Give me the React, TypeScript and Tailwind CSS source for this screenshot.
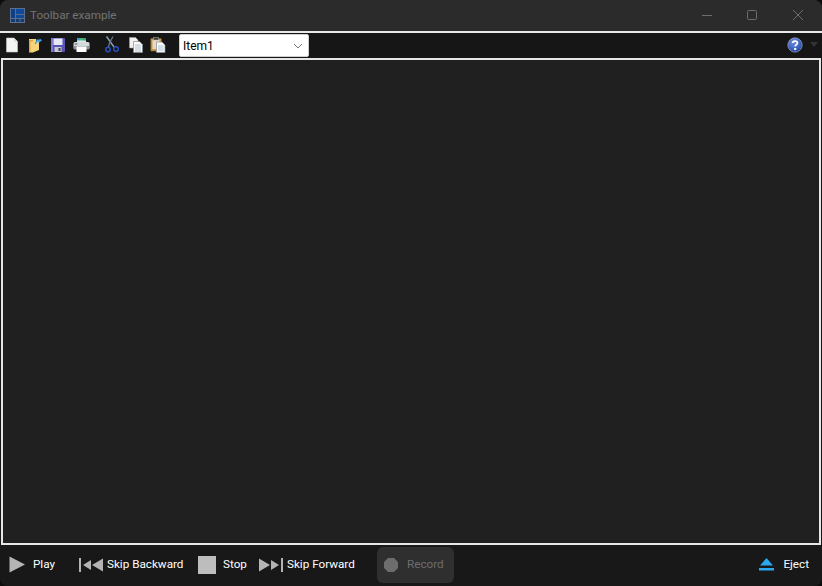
import React from "react";

const font = { fontFamily: 'Roboto, "Noto Sans", sans-serif' };

function PageIcon() {
  return (
    <svg width="16" height="16" viewBox="0 0 16 16">
      <path d="M2.5 1 H10 L13.5 4.5 V15 H2.5 Z" fill="#f4f4f4" stroke="#c8c8c8" strokeWidth="0.6" />
      <path d="M10 1 V4.5 H13.5" fill="#d8d8d8" />
    </svg>
  );
}
function OpenIcon() {
  return (
    <svg width="16" height="16" viewBox="0 0 16 16">
      <path d="M2 2 H9 V4 H12 V13 L6 15.5 H2 Z" fill="#f6d47a" />
      <path d="M6 3 H2 V15 H3.5 V4.5 H6 Z" fill="#e0a93e" />
      <path d="M7.5 7 L9.5 3.5 L9 2.5 H13 L12.5 1 L15 3.5 L11.5 6 L11.5 4.5 H10.5 L9 7 Z" fill="#3f9ae0" />
    </svg>
  );
}
function SaveIcon() {
  return (
    <svg width="16" height="16" viewBox="0 0 16 16">
      <rect x="1" y="1" width="14" height="14" rx="1" fill="#5a54b8" />
      <rect x="3.5" y="1.5" width="9" height="6.5" fill="#e6e6f4" />
      <rect x="4.5" y="10" width="7" height="5" fill="#c9c9d6" />
      <rect x="8.5" y="11" width="2" height="3" fill="#3a3a55" />
      <rect x="1" y="1" width="2" height="14" fill="#7f7ad8" />
    </svg>
  );
}
function PrintIcon() {
  return (
    <svg width="17" height="16" viewBox="0 0 17 16">
      <rect x="4" y="1.5" width="9" height="4" fill="#dfe8ea" />
      <rect x="4" y="1.5" width="3" height="2" fill="#35a0e0" />
      <rect x="7" y="1.5" width="3" height="2" fill="#3bc46a" />
      <rect x="10" y="1.5" width="3" height="2" fill="#1fa7a0" />
      <rect x="0.5" y="5" width="16" height="6.5" rx="1.5" fill="#d6dadc" />
      <rect x="0.5" y="9" width="16" height="3.5" rx="1" fill="#8d9296" />
      <rect x="3.5" y="9.5" width="10" height="5.5" fill="#ffffff" />
      <rect x="1.5" y="6.5" width="3" height="1" fill="#5a6066" />
    </svg>
  );
}
function CutIcon() {
  return (
    <svg width="16" height="17" viewBox="0 0 16 17" fill="none">
      <path d="M2.5 0.5 L10 11" stroke="#8fa3b4" strokeWidth="1.4" />
      <path d="M9 0.5 L5.5 7 L4.5 11" stroke="#5f7488" strokeWidth="1.4" />
      <circle cx="4" cy="13.5" r="2.3" stroke="#2650c0" strokeWidth="1.5" />
      <circle cx="12" cy="13" r="2.3" stroke="#2650c0" strokeWidth="1.5" />
    </svg>
  );
}
function CopyIcon() {
  return (
    <svg width="16" height="16" viewBox="0 0 16 16">
      <path d="M1.5 0.5 H7.5 L10 3 V11 H1.5 Z" fill="#f2f2f2" stroke="#9a9a9a" strokeWidth="0.6" />
      <path d="M5.5 4.5 H11.5 L14.5 7.5 V15.5 H5.5 Z" fill="#fafafa" stroke="#8a8a8a" strokeWidth="0.7" />
      <path d="M7 8 H13 M7 10 H13 M7 12 H13 M7 14 H13" stroke="#9ab4d0" strokeWidth="0.8" />
    </svg>
  );
}
function PasteIcon() {
  return (
    <svg width="16" height="16" viewBox="0 0 16 16">
      <rect x="0.8" y="1.5" width="10.5" height="12.5" rx="0.5" fill="#c69a50" stroke="#8f6a2c" strokeWidth="0.6" />
      <rect x="2.5" y="3" width="7" height="9" fill="#e6dcc4" />
      <rect x="3.5" y="0.5" width="5" height="2.5" fill="#3c3c3c" stroke="#b0b0b0" strokeWidth="0.5" />
      <path d="M6.5 5 H12 L15 8 V15.5 H6.5 Z" fill="#fafafa" stroke="#8a8a8a" strokeWidth="0.7" />
      <path d="M8 9 H13.5 M8 11 H13.5 M8 13 H13.5" stroke="#9ab4d0" strokeWidth="0.8" />
    </svg>
  );
}
function HelpIcon() {
  return (
    <svg width="16" height="16" viewBox="0 0 16 16">
      <defs>
        <radialGradient id="h" cx="0.4" cy="0.3" r="0.8">
          <stop offset="0" stopColor="#6f90e8" />
          <stop offset="1" stopColor="#1f3f9f" />
        </radialGradient>
      </defs>
      <circle cx="8" cy="8" r="7.2" fill="url(#h)" stroke="#c8d0e0" strokeWidth="0.5" />
      <path d="M5.7 6 C5.7 3.6 10.4 3.6 10.4 6 C10.4 7.6 8.2 7.6 8.2 9.6" fill="none" stroke="#fff" strokeWidth="1.7" />
      <rect x="7.2" y="11" width="2" height="2" fill="#fff" />
    </svg>
  );
}

const G = "#b4b4b4";

function ToolButton({ icon, label, w, gap }: { icon: React.ReactNode; label: string; w: string; gap: string }) {
  return (
    <div className={`flex items-center text-white ${w} ${gap}`}>
      {icon}
      <span className="whitespace-nowrap">{label}</span>
    </div>
  );
}

export default function App() {
  return (
    <div className="w-[822px] h-[586px] bg-[#0c0c0c] overflow-hidden" style={font}>
      <div className="h-full rounded-[8px] overflow-hidden flex flex-col bg-[#181818] text-[11.7px] text-white">
        <div className="h-[31px] shrink-0 bg-[#2b2b2b] flex items-center pl-[10px]">
          <svg width="15" height="15" viewBox="0 0 15 15" className="mr-[5px]">
            <rect x="0.5" y="0.5" width="14" height="14" fill="#16396e" stroke="#5a6f8e" />
            <rect x="1" y="1" width="4" height="9" fill="#0f3f86" />
            <rect x="6" y="1" width="8" height="5" fill="#0f4a9a" />
            <rect x="6" y="7" width="8" height="3" fill="#0f4a9a" />
            <path d="M5.5 1 V14 M1 10.5 H14 M5.5 6.5 H14 M10 10.5 V14" stroke="#5a6f8e" strokeWidth="1" />
          </svg>
          <span className="text-[#737373]">Toolbar example</span>
          <div className="ml-auto flex items-center">
            <svg width="46" height="31" viewBox="0 0 46 31"><path d="M18 15.5 H28" stroke="#6e6e6e" /></svg>
            <svg width="46" height="31" viewBox="0 0 46 31"><rect x="17.5" y="10.5" width="9" height="9" rx="1" fill="none" stroke="#6e6e6e" /></svg>
            <svg width="46" height="31" viewBox="0 0 46 31"><path d="M17 10 L27 20 M27 10 L17 20" stroke="#6e6e6e" /></svg>
          </div>
        </div>
        <div className="h-[2px] shrink-0 bg-[#e8e8e8]" />
        <div className="h-[25px] shrink-0 bg-[#161616] flex items-center pl-[4px] pr-[4px]">
          <div className="w-[23px] flex mb-[2px]"><PageIcon /></div>
          <div className="w-[23px] flex mb-[2px]"><OpenIcon /></div>
          <div className="w-[23px] flex mb-[2px]"><SaveIcon /></div>
          <div className="w-[31px] flex mb-[2px]"><PrintIcon /></div>
          <div className="w-[24px] flex mb-[2px]"><CutIcon /></div>
          <div className="w-[22px] flex mb-[2px]"><CopyIcon /></div>
          <div className="w-[29px] flex mb-[2px]"><PasteIcon /></div>
          <div className="w-[130px] h-[23px] bg-white rounded-[2px] border border-[#cfcfcf] flex items-center pl-[3px] pr-[3px] text-black text-[12px]">
            <span>Item1</span>
            <svg width="10" height="6" viewBox="0 0 10 6" className="ml-auto mr-[2px]"><path d="M1 1 L5 5 L9 1" fill="none" stroke="#777" /></svg>
          </div>
          <div className="ml-auto flex items-center gap-[7px] mb-[2px]">
            <HelpIcon />
            <svg width="8" height="5" viewBox="0 0 8 5"><path d="M0 0 H8 L4 5 Z" fill="#333" /></svg>
          </div>
        </div>
        <div className="flex-1 bg-[#202020] border-2 border-[#e6e6e6] mx-px" />
        <div className="h-[41px] shrink-0 bg-[#181818] flex items-center pl-[9px] pr-[13px] pb-[1px]">
          <ToolButton w="w-[70px]" gap="gap-[7px]" label="Play" icon={
            <svg width="17" height="17" viewBox="0 0 17 17"><path d="M0.5 0.5 L16 8.5 L0.5 16.5 Z" fill={G} /></svg>
          } />
          <ToolButton w="w-[119px]" gap="gap-[4px]" label="Skip Backward" icon={
            <svg width="24" height="14" viewBox="0 0 24 14"><path d="M0 0 H2 V14 H0 Z M4 7 L12 2 V12 Z M13 7 L24 0.5 V13.5 Z" fill={G} /></svg>
          } />
          <ToolButton w="w-[61px]" gap="gap-[7px]" label="Stop" icon={
            <div className="w-[18px] h-[18px] bg-[#bdbdbd]" />
          } />
          <ToolButton w="w-[118px]" gap="gap-[4px]" label="Skip Forward" icon={
            <svg width="24" height="14" viewBox="0 0 24 14"><path d="M0 0.5 L11 7 L0 13.5 Z M12 2 L20 7 L12 12 Z M22 0 H24 V14 H22 Z" fill={G} /></svg>
          } />
          <div className="w-[77px] h-[36px] rounded-[6px] bg-[#2f2f2f] flex items-center pl-[6px] gap-[8px] text-[#6d6d6d]">
            <svg width="16" height="16" viewBox="0 0 16 16"><path d="M5 1 H11 L15 5 V11 L11 15 H5 L1 11 V5 Z" fill="#6d6d6d" /></svg>
            <span>Record</span>
          </div>
          <div className="ml-auto flex items-center gap-[9px]">
            <svg width="15" height="13" viewBox="0 0 15 13"><path d="M7.5 0 L14 7.5 H1 Z M0 10 H15 V12.5 H0 Z" fill="#2ba7f0" /></svg>
            <span>Eject</span>
          </div>
        </div>
      </div>
    </div>
  );
}
